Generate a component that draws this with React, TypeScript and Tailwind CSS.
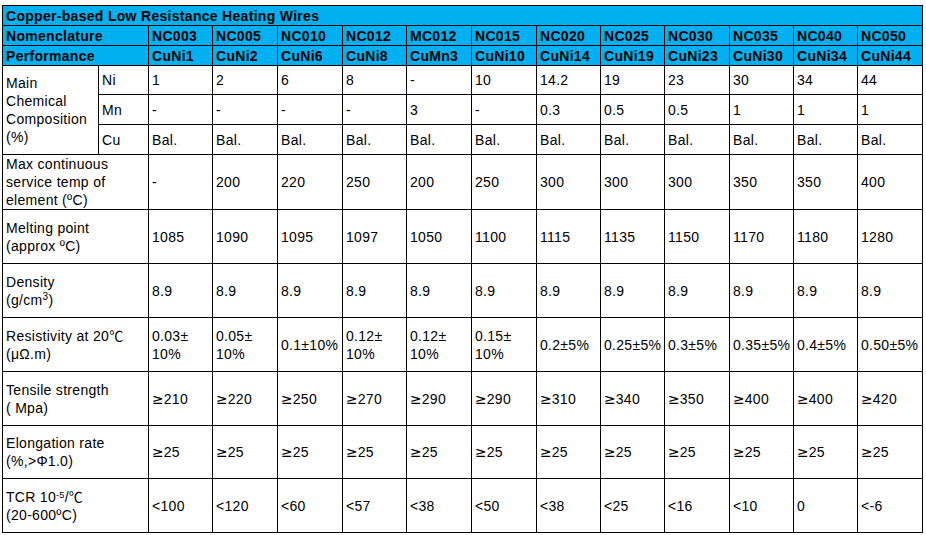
import React from 'react'

const grades = ['NC003', 'NC005', 'NC010', 'NC012', 'MC012', 'NC015', 'NC020', 'NC025', 'NC030', 'NC035', 'NC040', 'NC050']
const alloys = ['CuNi1', 'CuNi2', 'CuNi6', 'CuNi8', 'CuMn3', 'CuNi10', 'CuNi14', 'CuNi19', 'CuNi23', 'CuNi30', 'CuNi34', 'CuNi44']
const colWidths = [64, 65, 65, 64, 65, 65, 64, 64, 65, 64, 64, 65]

const ni = ['1', '2', '6', '8', '-', '10', '14.2', '19', '23', '30', '34', '44']
const mn = ['-', '-', '-', '-', '3', '-', '0.3', '0.5', '0.5', '1', '1', '1']
const cu = Array(12).fill('Bal.')

// CJK font for ℃ so it comes out like the sheet
const Cjk = ({ children }: { children: React.ReactNode }) => (
  <span className="font-['Noto_Sans_CJK_SC',sans-serif] tracking-normal">{children}</span>
)

const ge = (n: string) => (
  <>
    <span className="font-['DejaVu_Sans',sans-serif] tracking-normal">≥</span>
    {n}
  </>
)

type Row = { label: React.ReactNode; values: React.ReactNode[]; h: string }

const rows: Row[] = [
  {
    label: (
      <>
        Max continuous
        <br />
        service temp of
        <br />
        element (ºC)
      </>
    ),
    values: ['-', '200', '220', '250', '200', '250', '300', '300', '300', '350', '350', '400'],
    h: 'h-[54px]',
  },
  {
    label: (
      <>
        Melting point
        <br />
        (approx ºC)
      </>
    ),
    values: ['1085', '1090', '1095', '1097', '1050', '1100', '1115', '1135', '1150', '1170', '1180', '1280'],
    h: 'h-[54px]',
  },
  {
    label: (
      <>
        Density
        <br />
        (g/cm<sup className="text-[10px] leading-none">3</sup>)
      </>
    ),
    values: Array(12).fill('8.9'),
    h: 'h-[54px]',
  },
  {
    label: (
      <>
        Resistivity at 20<Cjk>℃</Cjk>
        <br />
        (μΩ.m)
      </>
    ),
    values: [
      <>0.03±<br />10%</>,
      <>0.05±<br />10%</>,
      '0.1±10%',
      <>0.12±<br />10%</>,
      <>0.12±<br />10%</>,
      <>0.15±<br />10%</>,
      '0.2±5%',
      '0.25±5%',
      '0.3±5%',
      '0.35±5%',
      '0.4±5%',
      '0.50±5%',
    ],
    h: 'h-[54px]',
  },
  {
    label: (
      <>
        Tensile strength
        <br />( Mpa)
      </>
    ),
    values: ['210', '220', '250', '270', '290', '290', '310', '340', '350', '400', '400', '420'].map(ge),
    h: 'h-[54px]',
  },
  {
    label: (
      <>
        Elongation rate
        <br />
        (%,&gt;Φ1.0)
      </>
    ),
    values: Array(12).fill(ge('25')),
    h: 'h-[53px]',
  },
  {
    label: (
      <>
        TCR 10<sup className="text-[9px] leading-none">-5</sup>/<Cjk>℃</Cjk>
        <br />
        (20-600ºC)
      </>
    ),
    values: ['<100', '<120', '<60', '<57', '<38', '<50', '<38', '<25', '<16', '<10', '0', '<-6'],
    h: 'h-[54px]',
  },
]

const cell = 'border border-black px-[3px] align-middle whitespace-nowrap'
const head = 'border border-black px-[3px] bg-[#00b0f0] font-bold h-[20px] leading-[18px] whitespace-nowrap'

export default function App() {
  return (
    <div className="w-[926px] h-[535px] bg-white pl-[2px] pt-[5px] text-black font-['Liberation_Sans',Arial,sans-serif] text-[14px] leading-[18px] tracking-[0.3px]">
      <table className="table-fixed border-collapse w-[921px]">
        <colgroup>
          <col className="w-[96px]" />
          <col className="w-[50px]" />
          {colWidths.map((w, i) => (
            <col key={i} style={{ width: w }} />
          ))}
        </colgroup>
        <tbody>
          <tr>
            <td colSpan={14} className={head}>
              Copper-based Low Resistance Heating Wires
            </td>
          </tr>
          <tr>
            <td colSpan={2} className={head}>
              Nomenclature
            </td>
            {grades.map((g) => (
              <td key={g} className={head}>
                {g}
              </td>
            ))}
          </tr>
          <tr>
            <td colSpan={2} className={head}>
              Performance
            </td>
            {alloys.map((a) => (
              <td key={a} className={head}>
                {a}
              </td>
            ))}
          </tr>
          {[
            { el: 'Ni', vals: ni, h: 'h-[29px]' },
            { el: 'Mn', vals: mn, h: 'h-[30px]' },
            { el: 'Cu', vals: cu, h: 'h-[30px]' },
          ].map((r, ri) => (
            <tr key={r.el} className={r.h}>
              {ri === 0 && (
                <td rowSpan={3} className={cell}>
                  Main
                  <br />
                  Chemical
                  <br />
                  Composition
                  <br />
                  (%)
                </td>
              )}
              <td className={cell}>{r.el}</td>
              {r.vals.map((v, i) => (
                <td key={i} className={cell}>
                  {v}
                </td>
              ))}
            </tr>
          ))}
          {rows.map((r, ri) => (
            <tr key={ri} className={r.h}>
              <td colSpan={2} className={cell}>
                {r.label}
              </td>
              {r.values.map((v, i) => (
                <td key={i} className={cell}>
                  {v}
                </td>
              ))}
            </tr>
          ))}
        </tbody>
      </table>
    </div>
  )
}
